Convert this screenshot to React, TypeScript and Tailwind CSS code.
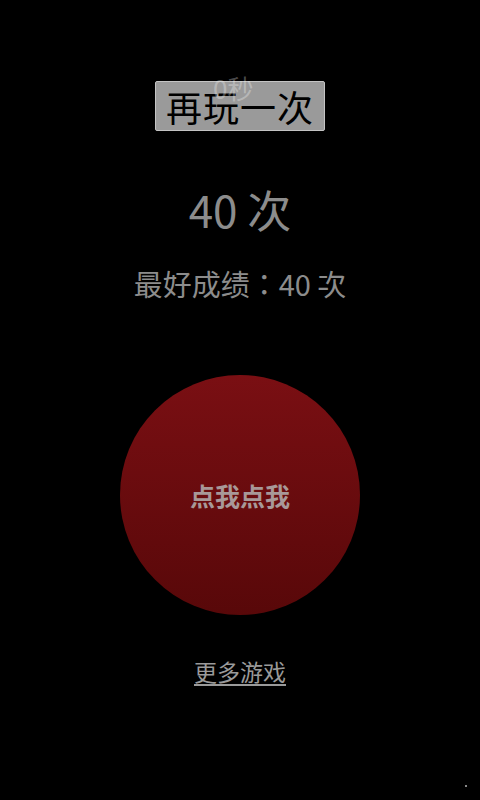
import React from "react";

const font = { fontFamily: '"Noto Sans CJK SC", "Noto Sans", sans-serif' };
const fontTC = { fontFamily: '"Noto Sans CJK TC", "Noto Sans", sans-serif' };

export default function App() {
  return (
    <div className="relative w-[480px] h-[800px] bg-black overflow-hidden" style={font}>
      <div className="flex flex-col items-center">
        <div className="relative mt-[81px]">
          <button className="w-[170px] h-[50px] bg-[#9a9a9a] border border-[#c4c4c4] rounded-[2px] text-black text-[36px] leading-[48px] tracking-[1px]">
            再玩一次
          </button>
          <div className="absolute left-[58px] top-[-10px] text-[26px] leading-[34px] text-white/30 pointer-events-none">
            0秒
          </div>
        </div>
        <div className="mt-[52px] text-[#8c8c8c] text-[44px] leading-[52px]">40 次</div>
        <div className="mt-[31px] text-[#8c8c8c] text-[29px] leading-[34px]" style={fontTC}>最好成绩：40 次</div>
        <div className="mt-[75px] w-[240px] h-[240px] rounded-full bg-gradient-to-b from-[#7a0f13] to-[#580809] flex items-center justify-center">
          <span className="text-[#a89898] text-[25px] font-bold leading-[32px]">点我点我</span>
        </div>
        <a className="mt-[41px] text-[#9a9a9a] text-[23px] leading-[30px] underline underline-offset-[3px]">更多游戏</a>
      </div>
      <div className="absolute left-[465px] top-[785px] w-[2px] h-[2px] bg-[#888]" />
    </div>
  );
}
